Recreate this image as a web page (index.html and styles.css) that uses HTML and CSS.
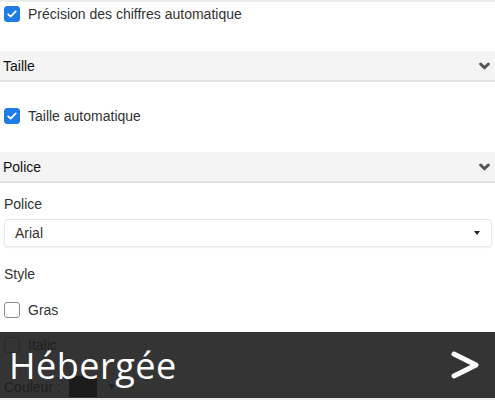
FILE: index.html
```html
<!DOCTYPE html>
<html lang="fr">
<head>
    <meta charset="UTF-8">
    <meta name="viewport" content="width=device-width, initial-scale=1.0">
    <title>Format</title>
    <link rel="stylesheet" href="styles.css">
</head>
<body>
    <div class="panel">
        <div class="top-rule"></div>

        <div class="check-row first">
            <span class="box checked">
                <svg viewBox="0 0 16 16" width="12" height="12"><path d="M3 8.5l3.2 3L13 4.5" fill="none" stroke="#fff" stroke-width="2.4" stroke-linecap="round" stroke-linejoin="round"/></svg>
            </span>
            <span class="check-label">Précision des chiffres automatique</span>
        </div>

        <div class="section-head">
            <span>Taille</span>
            <svg class="chev" viewBox="0 0 12 8" width="11" height="8"><path d="M1.8 1.8l4.2 4.2 4.2-4.2" fill="none" stroke="#555" stroke-width="3.2" stroke-linecap="round" stroke-linejoin="round"/></svg>
        </div>

        <div class="check-row after-head">
            <span class="box checked">
                <svg viewBox="0 0 16 16" width="12" height="12"><path d="M3 8.5l3.2 3L13 4.5" fill="none" stroke="#fff" stroke-width="2.4" stroke-linecap="round" stroke-linejoin="round"/></svg>
            </span>
            <span class="check-label">Taille automatique</span>
        </div>

        <div class="section-head second">
            <span>Police</span>
            <svg class="chev" viewBox="0 0 12 8" width="11" height="8"><path d="M1.8 1.8l4.2 4.2 4.2-4.2" fill="none" stroke="#555" stroke-width="3.2" stroke-linecap="round" stroke-linejoin="round"/></svg>
        </div>

        <div class="field-label font-label">Police</div>
        <div class="select">
            <span>Arial</span>
            <span class="caret"></span>
        </div>

        <div class="field-label style-label">Style</div>
        <div class="check-row bold-row">
            <span class="box"></span>
            <span class="check-label">Gras</span>
        </div>
        <div class="check-row italic-row">
            <span class="box"></span>
            <span class="check-label">Italic</span>
        </div>
        <div class="color-row">
            <span class="check-label">Couleur :</span>
            <span class="swatch"></span>
            <span class="down">▼</span>
        </div>
    </div>

    <div class="banner">
        <span class="banner-title">Hébergée</span>
        <svg class="banner-arrow" viewBox="0 0 30 30" width="30" height="30"><path d="M4 4l22 11L4 26" fill="none" stroke="#fff" stroke-width="5" stroke-linecap="round" stroke-linejoin="round"/></svg>
    </div>
</body>
</html>
```

FILE: styles.css
```css
body {
    margin: 0;
    font-family: "Liberation Sans", Arial, sans-serif;
    font-size: 14px;
    color: #333;
    background: #fff;
    width: 495px;
    height: 400px;
    overflow: hidden;
    position: relative;
}
.top-rule {
    height: 2px;
    background: #ececec;
}
.check-row {
    display: flex;
    align-items: center;
    height: 23px;
    padding-left: 4px;
}
.check-row.after-head {
    margin-top: 22px;
}
.check-row.bold-row {
    margin-top: 13px;
}
.check-row.italic-row {
    margin-top: 12px;
}
.box {
    width: 14px;
    height: 14px;
    border: 1px solid #8a8a8a;
    border-radius: 3px;
    background: #fff;
    display: flex;
    align-items: center;
    justify-content: center;
    margin-right: 8px;
    flex-shrink: 0;
}
.box.checked {
    background: #1f7be6;
    border-color: #1f7be6;
}
.check-label {
    color: #333;
}
.section-head {
    display: flex;
    align-items: center;
    justify-content: space-between;
    height: 29px;
    margin-top: 26px;
    padding: 0 5px 0 3px;
    background: #f4f4f4;
    border-bottom: 2px solid #e2e2e2;
    color: #111;
}
.section-head.second {
    margin-top: 25px;
}
.chev {
    margin-top: 1px;
}
.field-label {
    height: 22px;
    line-height: 22px;
    padding-left: 4px;
}
.font-label {
    margin-top: 10px;
}
.style-label {
    margin-top: 16px;
}
.select {
    display: flex;
    align-items: center;
    justify-content: space-between;
    height: 26px;
    margin: 4px 3px 0 4px;
    padding: 0 11px 0 10px;
    border: 1px solid #e6e6e6;
    border-radius: 4px;
    box-shadow: 0 1px 2px rgba(0, 0, 0, 0.06);
}
.caret {
    width: 0;
    height: 0;
    border-left: 3.5px solid transparent;
    border-right: 3.5px solid transparent;
    border-top: 4px solid #222;
}
.color-row {
    display: flex;
    align-items: center;
    height: 21px;
    margin-top: 20px;
    padding-left: 4px;
}
.swatch {
    width: 28px;
    height: 21px;
    background: #000;
    margin-left: 8px;
}
.down {
    font-size: 10px;
    margin-left: 10px;
    color: #333;
}
.banner {
    position: absolute;
    left: 0;
    top: 332px;
    width: 495px;
    height: 66px;
    background: rgba(30, 30, 30, 0.9);
    border-bottom: 2px solid #eee;
    display: flex;
    align-items: center;
    justify-content: space-between;
}
.banner-title {
    font-family: "Open Sans", sans-serif;
    font-weight: 500;
    font-size: 36px;
    color: #fff;
    margin-left: 9px;
    letter-spacing: 0.5px;
}
.banner-arrow {
    margin-right: 15px;
}
```
